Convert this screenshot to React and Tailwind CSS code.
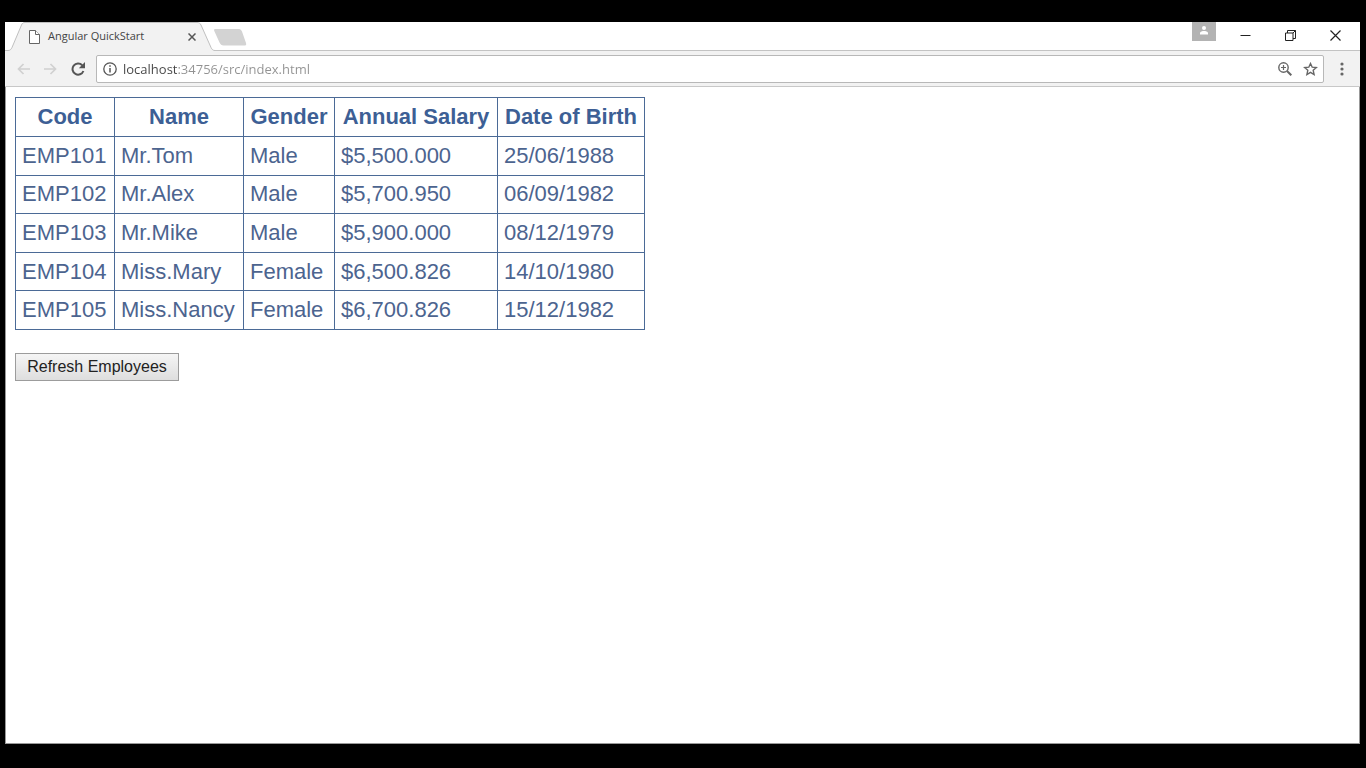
import { useState } from "react";

const EMPLOYEES = [
  { code: "EMP101", name: "Mr.Tom", gender: "Male", salary: "$5,500.000", birth: "25/06/1988" },
  { code: "EMP102", name: "Mr.Alex", gender: "Male", salary: "$5,700.950", birth: "06/09/1982" },
  { code: "EMP103", name: "Mr.Mike", gender: "Male", salary: "$5,900.000", birth: "08/12/1979" },
  { code: "EMP104", name: "Miss.Mary", gender: "Female", salary: "$6,500.826", birth: "14/10/1980" },
  { code: "EMP105", name: "Miss.Nancy", gender: "Female", salary: "$6,700.826", birth: "15/12/1982" },
];

function TabStrip() {
  return (
    <div className="relative flex h-7 shrink-0 justify-between bg-white">
      <div className="flex">
        <div className="relative flex h-7 w-[209px] items-center pt-px pr-[14px] pl-6">
          <svg className="absolute inset-0" width="211" height="29" viewBox="0 0 211 29" aria-hidden="true">
            <path d="M0 29V28.500H3C5 28.500 6 27.500 7 25.500L16.500 3C17.300 1 18.300 .5 20 .5H192C194 .5 195 1 196 3L206 25.500C207 27.500 208 28.500 210 28.500V29Z" fill="#f2f2f2" />
            <path d="M0 28.500H3C5 28.500 6 27.500 7 25.500L16.500 3C17.300 1 18.300 .5 20 .5H192C194 .5 195 1 196 3L206 25.500C207 27.500 208 28.500 210 28.500" fill="none" stroke="#c0c0c0" />
          </svg>
          <svg className="relative" width="11" height="14" viewBox="0 0 11 14" fill="#fff" stroke="#666" aria-hidden="true">
            <path d="M.5 .5H6.500L10.500 4.500V13.500H.5Z" />
            <path d="M6.500 .5V4.500H10.500" />
          </svg>
          <span className="relative ml-2 flex-1 text-[11px] whitespace-nowrap text-[#444]">Angular QuickStart</span>
          <button type="button" aria-label="Close tab" className="relative flex size-4 items-center justify-center">
            <svg width="8" height="8" viewBox="0 0 8 8" stroke="#555" strokeWidth="1.500" aria-hidden="true">
              <path d="M.5 .5L7.500 7.500M7.500 .5L.5 7.500" />
            </svg>
          </button>
        </div>
        <button type="button" aria-label="New tab" className="mt-[5px] h-5">
          <svg width="33" height="20" viewBox="0 0 33 20" aria-hidden="true">
            <path d="M1.500 2H24C26 2 27 2.500 28 4.500L32 16C32.500 18 32 18.500 30 18.500H9.500C7.500 18.500 6.500 17.500 5.500 15.500L.5 4.500C-.3 2.800 0 2 1.500 2Z" fill="#d3d3d3" />
          </svg>
        </button>
      </div>
      <div className="flex items-start">
        <button type="button" aria-label="Profile" className="mr-[7px] flex h-[19px] w-6 justify-center bg-[#b3b3b3] pt-1">
          <svg width="10" height="9" viewBox="0 0 10 9" fill="#fff" aria-hidden="true">
            <circle cx="5" cy="2" r="2" />
            <path d="M1 8.500V7C1 5.500 3.500 5 5 5S9 5.500 9 7V8.500Z" />
          </svg>
        </button>
        <button type="button" aria-label="Minimize" className="flex h-[26px] w-11 items-center justify-center">
          <svg width="11" height="11" viewBox="0 0 11 11" stroke="#222" aria-hidden="true"><path d="M.5 5.500H10.500" /></svg>
        </button>
        <button type="button" aria-label="Restore" className="flex h-[26px] w-[46px] items-center justify-center">
          <svg width="11" height="11" viewBox="0 0 11 11" fill="none" stroke="#222" aria-hidden="true">
            <path d="M.5 3H8V10.500H.5ZM2.500 3V.5H10.500V8.500H8M8 3L10.500 .5" />
          </svg>
        </button>
        <button type="button" aria-label="Close window" className="mr-[3px] flex h-[26px] w-11 items-center justify-center">
          <svg width="11" height="11" viewBox="0 0 11 11" stroke="#222" strokeWidth="1.200" aria-hidden="true">
            <path d="M.5 .5L10.500 10.500M10.500 .5L.5 10.500" />
          </svg>
        </button>
      </div>
    </div>
  );
}

function Toolbar() {
  const [url, setUrl] = useState("localhost:34756/src/index.html");
  return (
    <div className="flex h-[37px] shrink-0 items-center border-t border-b border-t-[#c3c3c3] border-b-[#c8c8c8] bg-[#f2f2f2] pr-4 pl-3">
      <button type="button" aria-label="Back" className="mr-[14px]">
        <svg width="13" height="12" viewBox="0 0 13 12" fill="none" stroke="#d0d0d0" strokeWidth="1.700" aria-hidden="true">
          <path d="M13 6H1.500M6.500 1L1.500 6L6.500 11" />
        </svg>
      </button>
      <button type="button" aria-label="Forward" className="mr-[14px]">
        <svg width="13" height="12" viewBox="0 0 13 12" fill="none" stroke="#d0d0d0" strokeWidth="1.700" aria-hidden="true">
          <path d="M0 6H11.500M6.500 1L11.500 6L6.500 11" />
        </svg>
      </button>
      <button type="button" aria-label="Reload" className="mr-[11px]">
        <svg width="14" height="14" viewBox="0 0 14 14" aria-hidden="true">
          <path d="M11.200 3.200A5.600 5.600 0 1 0 12.400 9" fill="none" stroke="#555" strokeWidth="2" />
          <path d="M14 0V6.200H7.800Z" fill="#555" />
        </svg>
      </button>
      <div className="flex h-7 min-w-0 flex-1 items-center rounded-xs border border-[#b8b8b8] bg-white pr-[5px] pl-[6px]">
        <svg width="14" height="14" viewBox="0 0 14 14" fill="none" stroke="#555" aria-hidden="true">
          <circle cx="7" cy="7" r="6.200" strokeWidth="1.300" />
          <path d="M7 6V10.500M7 3.300V4.800" strokeWidth="1.500" />
        </svg>
        <input
          aria-label="Address"
          value={url}
          onChange={(event) => setUrl(event.target.value)}
          className="ml-[6px] min-w-0 flex-1 bg-[linear-gradient(90deg,#444_54px,#929292_54px)] bg-clip-text text-[13px] leading-5 text-transparent caret-black outline-none"
        />
        <button type="button" aria-label="Zoom" className="mr-[11px]">
          <svg width="14" height="14" viewBox="0 0 14 14" fill="none" stroke="#666" aria-hidden="true">
            <circle cx="5.500" cy="5.500" r="4.700" strokeWidth="1.400" />
            <path d="M9 9L13.300 13.300" strokeWidth="2" />
            <path d="M3 5.500H8M5.500 3V8" strokeWidth="1.200" />
          </svg>
        </button>
        <button type="button" aria-label="Bookmark">
          <svg width="15" height="14" viewBox="0 0 15 14" fill="none" stroke="#666" strokeWidth="1.400" aria-hidden="true">
            <path d="M7.500 1.500L9.200 5.200L13.300 5.600L10.200 8.300L11.100 12.500L7.500 10.300L3.900 12.500L4.800 8.300L1.700 5.600L5.800 5.200Z" />
          </svg>
        </button>
      </div>
      <button type="button" aria-label="Menu" className="ml-4">
        <svg width="4" height="14" viewBox="0 0 4 14" fill="#666" aria-hidden="true">
          <circle cx="2" cy="2" r="1.600" />
          <circle cx="2" cy="7" r="1.600" />
          <circle cx="2" cy="12" r="1.600" />
        </svg>
      </button>
    </div>
  );
}

function EmployeeTable({ employees }) {
  return (
    <table className="h-[233px] w-[630px] table-fixed border-collapse text-[22px] leading-7 text-[#4c648f] [&_td]:border [&_td]:border-[#4b6a96] [&_td]:px-[6px] [&_td]:whitespace-nowrap [&_th]:border [&_th]:border-[#4b6a96] [&_th]:whitespace-nowrap">
      <colgroup>
        <col className="w-[99px]" />
        <col className="w-[129px]" />
        <col className="w-[91px]" />
        <col className="w-[163px]" />
        <col className="w-[147px]" />
      </colgroup>
      <thead>
        <tr className="h-[39px] text-[#3d5f95]">
          <th>Code</th>
          <th>Name</th>
          <th>Gender</th>
          <th>Annual Salary</th>
          <th>Date of Birth</th>
        </tr>
      </thead>
      <tbody>
        {employees.map((employee) => (
          <tr key={employee.code}>
            <td>{employee.code}</td>
            <td>{employee.name}</td>
            <td>{employee.gender}</td>
            <td>{employee.salary}</td>
            <td>{employee.birth}</td>
          </tr>
        ))}
      </tbody>
    </table>
  );
}

export default function App() {
  const [employees, setEmployees] = useState(EMPLOYEES);
  return (
    <div className="flex min-h-screen flex-col bg-black pt-[22px] pr-[6px] pb-6 pl-[5px] font-['Open_Sans','Noto_Sans',sans-serif]">
      <div className="flex flex-1 flex-col bg-white">
        <TabStrip />
        <Toolbar />
        <main className="flex-1 border-r border-b border-l border-[#999] pt-[10px] pl-[9px] font-['Liberation_Sans',Arial,sans-serif]">
          <EmployeeTable employees={employees} />
          <button
            type="button"
            onClick={() => setEmployees([...EMPLOYEES])}
            className="mt-[23px] flex h-7 w-[164px] items-center justify-center border border-[#9c9c9c] bg-linear-to-b from-[#f5f5f5] to-[#dedede] text-base leading-5 whitespace-nowrap text-[#222]"
          >
            Refresh Employees
          </button>
        </main>
      </div>
    </div>
  );
}
